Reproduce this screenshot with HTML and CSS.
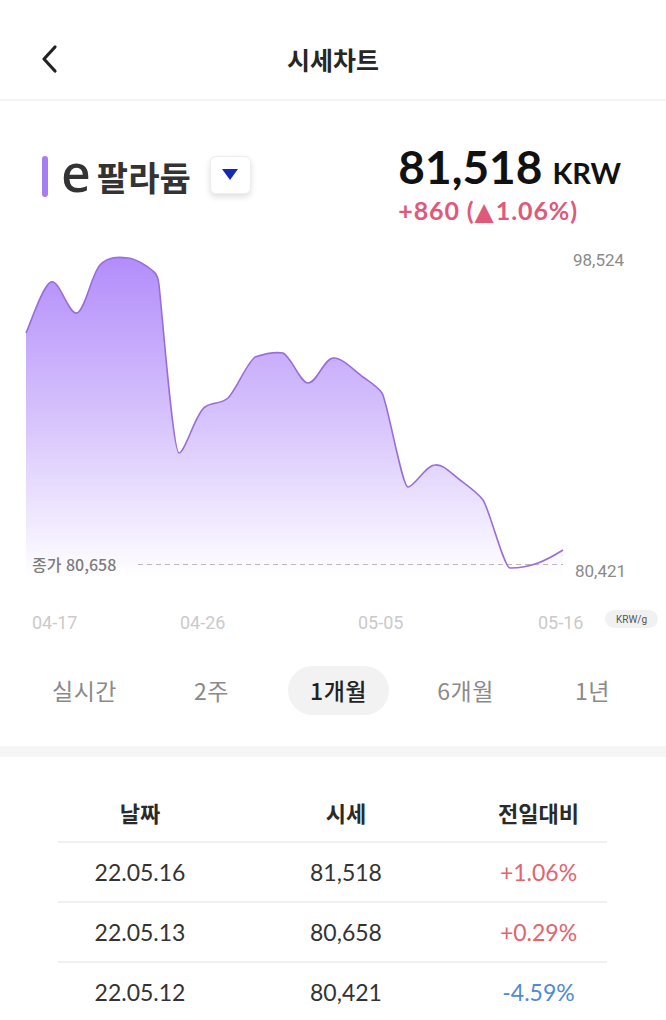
FILE: index.html
```html
<!DOCTYPE html>
<html lang="ko">
<head>
  <meta charset="UTF-8" />
  <meta name="viewport" content="width=device-width, initial-scale=1.0"/>
  <title>시세차트</title>
  <link rel="stylesheet" href="styles.css">
</head>
<body>

  <header class="topbar">
    <button class="back" aria-label="뒤로">
      <svg width="18" height="30" viewBox="0 0 18 30">
        <path d="M15 3 L4 15 L15 27" fill="none" stroke="#222" stroke-width="3.2" stroke-linecap="round" stroke-linejoin="round"/>
      </svg>
    </button>
    <h1>시세차트</h1>
  </header>

  <section class="summary">
    <div class="product">
      <span class="mark"></span>
      <span class="e">e</span>
      <span class="name">팔라듐</span>
      <button class="dropdown" aria-label="상품 선택">
        <svg width="16" height="11" viewBox="0 0 16 11"><path d="M0 0 H16 L8 11 Z" fill="#1428b4"/></svg>
      </button>
    </div>
    <div class="price">
      <div class="now">81,518<span class="unit">KRW</span></div>
      <div class="diff">+860 (<span class="tri">▲</span>1.06%)</div>
    </div>
  </section>

  <section class="chart">
    <svg width="666" height="405" viewBox="0 235 666 405">
      <defs>
        <linearGradient id="area" x1="0" y1="255" x2="0" y2="578" gradientUnits="userSpaceOnUse">
          <stop offset="0" stop-color="#b28cfb"/>
          <stop offset="0.55" stop-color="#dac8fc"/>
          <stop offset="1" stop-color="#ffffff"/>
        </linearGradient>
      </defs>

      <path class="area" d="M26 333 C30.2 324.5 42.5 285.3 51 282 C59.5 278.7 68.8 315.8 77 313 C85.2 310.2 91.5 274.2 100 265 C108.5 256 119.2 257 128 258 C136.8 259 147.8 266.5 153 271 C157 274 158.5 279 159 285 C162 310 173 453 179 453 C185 453 196 412 205 407 C213 401 220 405 228 398 C236.3 389.7 245.8 364.5 255 357 C264 354 276 352 283 353 C291.8 357.3 299.7 382.2 308 383 C316.3 383.8 323.8 359 333 358 C342.2 357 354.8 371.2 363 377 C371.2 382.8 378 387 382 393 C387 400 402 487 408 487 C414 487 426 465 435 465 C443.7 463.8 452 474.2 460 480 C468 485.8 477 492 483 500 C489 508 504 568 510 568 C520 568 530 566 538 563 C546 560 555 555 563 550 L563 578 L26 578 Z"/>

      <line class="close" x1="138" y1="564.5" x2="563" y2="564.5"/>

      <path class="line" d="M26 333 C30.2 324.5 42.5 285.3 51 282 C59.5 278.7 68.8 315.8 77 313 C85.2 310.2 91.5 274.2 100 265 C108.5 256 119.2 257 128 258 C136.8 259 147.8 266.5 153 271 C157 274 158.5 279 159 285 C162 310 173 453 179 453 C185 453 196 412 205 407 C213 401 220 405 228 398 C236.3 389.7 245.8 364.5 255 357 C264 354 276 352 283 353 C291.8 357.3 299.7 382.2 308 383 C316.3 383.8 323.8 359 333 358 C342.2 357 354.8 371.2 363 377 C371.2 382.8 378 387 382 393 C387 400 402 487 408 487 C414 487 426 465 435 465 C443.7 463.8 452 474.2 460 480 C468 485.8 477 492 483 500 C489 508 504 568 510 568 C520 568 530 566 538 563 C546 560 555 555 563 550"/>

      <text class="axis-y" x="573" y="266">98,524</text>
      <text class="axis-y" x="575" y="577">80,421</text>
      <text class="close-label" x="32" y="571">종가 80,658</text>

      <text class="axis-x" x="32" y="629">04-17</text>
      <text class="axis-x" x="180" y="629">04-26</text>
      <text class="axis-x" x="358" y="629">05-05</text>
      <text class="axis-x" x="538" y="629">05-16</text>

      <rect class="badge" x="605" y="610" width="53" height="18" rx="9"/>
      <text class="badge-text" x="631.5" y="623">KRW/g</text>
    </svg>
  </section>

  <nav class="periods">
    <span class="period">실시간</span>
    <span class="period">2주</span>
    <span class="period active">1개월</span>
    <span class="period">6개월</span>
    <span class="period">1년</span>
  </nav>

  <div class="gap"></div>

  <section class="history">
    <div class="row head">
      <span>날짜</span>
      <span>시세</span>
      <span>전일대비</span>
    </div>
    <div class="row">
      <span>22.05.16</span>
      <span>81,518</span>
      <span class="up">+1.06%</span>
    </div>
    <div class="row">
      <span>22.05.13</span>
      <span>80,658</span>
      <span class="up">+0.29%</span>
    </div>
    <div class="row">
      <span>22.05.12</span>
      <span>80,421</span>
      <span class="down">-4.59%</span>
    </div>
  </section>

</body>
</html>
```

FILE: styles.css
```css
body {
  margin: 0;
  background: #fff;
  font-family: "Noto Sans CJK KR", "Noto Sans", sans-serif;
  color: #222;
  width: 666px;
}

/* top bar */
.topbar {
  position: relative;
  height: 99px;
  display: flex;
  align-items: center;
  justify-content: center;
  border-bottom: 2px solid #f5f5f5;
}

.topbar h1 {
  margin: 18px 0 0;
  font-size: 25px;
  font-weight: 700;
  color: #262626;
}

.back {
  position: absolute;
  left: 40px;
  top: 44px;
  padding: 0;
  border: 0;
  background: none;
}

/* product + price */
.summary {
  height: 134px;
  display: flex;
  justify-content: space-between;
  align-items: flex-start;
  padding: 0 45px 0 42px;
  box-sizing: border-box;
}

.product {
  display: flex;
  align-items: center;
  margin-top: 55px;
}

.mark {
  width: 6px;
  height: 41px;
  border-radius: 3px;
  background: #a97df2;
}

.e {
  font-family: "Noto Sans", sans-serif;
  font-size: 52px;
  font-weight: 500;
  line-height: 40px;
  color: #333;
  margin: -9px 0 0 13px;
}

.name {
  font-size: 34px;
  font-weight: 700;
  color: #333;
  line-height: 40px;
  margin-left: 6px;
}

.dropdown {
  width: 41px;
  height: 38px;
  margin-left: 19px;
  margin-top: -4px;
  border: 1px solid #eee;
  border-radius: 6px;
  background: #fff;
  box-shadow: 0 3px 6px rgba(0, 0, 0, 0.13);
  display: flex;
  align-items: center;
  justify-content: center;
  padding: 0;
}

.price {
  font-family: Lato, sans-serif;
  margin-top: 41px;
}

.now {
  font-size: 46px;
  font-weight: 700;
  line-height: 50px;
  color: #111;
}

.unit {
  font-size: 29px;
  margin-left: 10px;
}

.diff {
  font-size: 25px;
  font-weight: 700;
  letter-spacing: 0.9px;
  line-height: 30px;
  color: #e0587a;
  margin-top: -3px;
}

.tri {
  font-family: "DejaVu Sans", sans-serif;
  font-size: 25px;
  margin-right: 1px;
}

/* chart */
.chart svg {
  display: block;
}

.area {
  fill: url(#area);
}

.line {
  fill: none;
  stroke: #9a6ed8;
  stroke-width: 1.6;
}

.close {
  stroke: #b9b9b9;
  stroke-width: 1.2;
  stroke-dasharray: 5 4;
}

.axis-y {
  font-family: Roboto, sans-serif;
  font-size: 17px;
  fill: #8a8a8a;
}

.close-label {
  font-family: "Noto Sans CJK KR", sans-serif;
  font-size: 16px;
  font-weight: 500;
  fill: #7c7c7c;
}

.axis-x {
  font-family: Roboto, sans-serif;
  font-size: 18px;
  fill: #cacaca;
}

.badge {
  fill: #f1f1f1;
}

.badge-text {
  font-family: Roboto, sans-serif;
  font-size: 10px;
  fill: #555;
  text-anchor: middle;
}

/* period tabs */
.periods {
  display: grid;
  grid-template-columns: repeat(5, 127px);
  padding: 26px 0 0 21px;
  height: 80px;
  box-sizing: border-box;
}

.period {
  justify-self: center;
  height: 49px;
  line-height: 48px;
  padding: 0 22px;
  border-radius: 25px;
  font-size: 23px;
  letter-spacing: 0.5px;
  color: #8a8a8a;
}

.period.active {
  background: #f2f2f2;
  color: #222;
  font-weight: 500;
}

.gap {
  margin-top: 26px;
  height: 11px;
  background: #f6f6f6;
}

/* daily table */
.history {
  margin: 26px 59px 0 58px;
}

.row {
  display: grid;
  grid-template-columns: 164px 248px 1fr;
  height: 60px;
  align-items: center;
  border-bottom: 2px solid #f0f0f0;
  box-sizing: border-box;
  font-family: Lato, sans-serif;
  font-size: 23px;
  color: #333;
  text-align: center;
}

.row.head {
  font-family: "Noto Sans CJK KR", sans-serif;
  font-size: 22px;
  font-weight: 700;
  color: #2a2a2a;
}

.up {
  color: #e2646c;
}

.down {
  color: #4f8ad6;
}
```
